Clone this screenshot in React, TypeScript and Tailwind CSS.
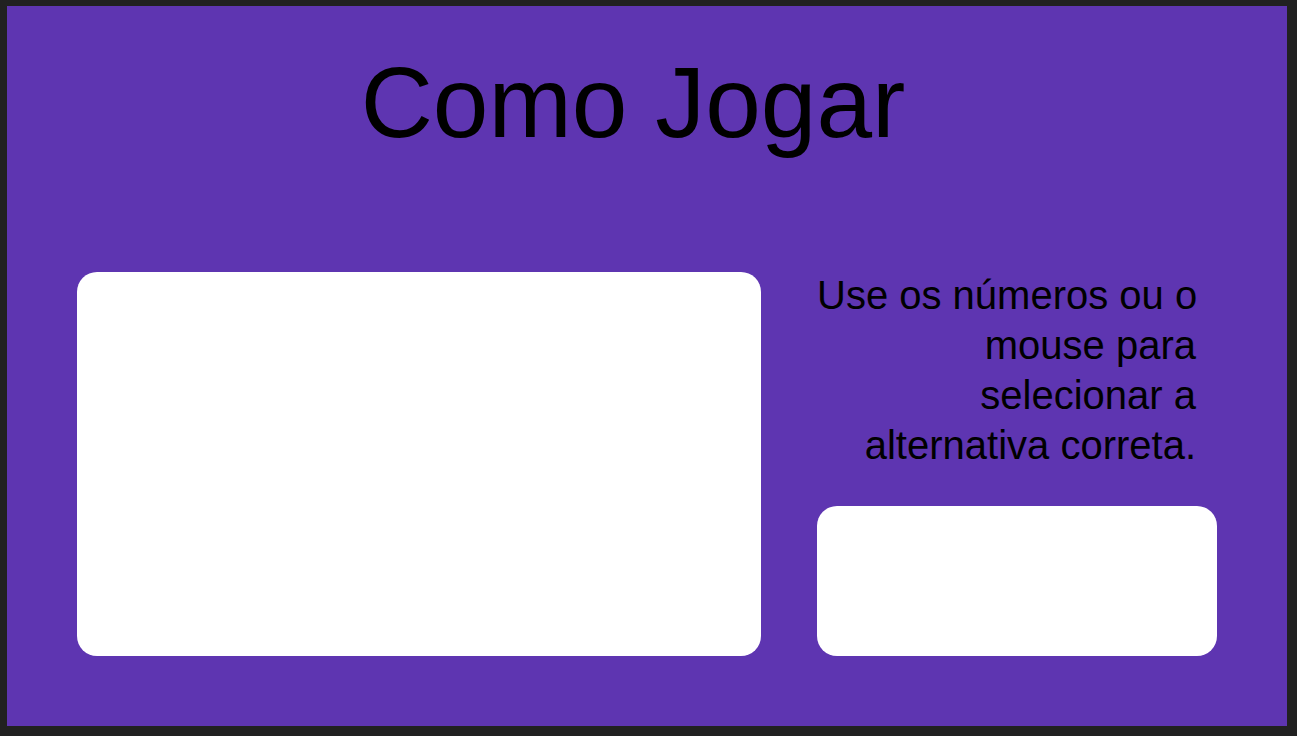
import React from "react";

export default function App() {
  return (
    <div className="w-[1297px] h-[736px] bg-[#212121] pl-[7px] pt-[6px] overflow-hidden">
      <div
        className="w-[1280px] h-[720px] bg-[#5e35b1] flex flex-col text-black"
        style={{ fontFamily: '"Liberation Sans", Arial, sans-serif' }}
      >
        <h1 className="pt-[46px] pr-[28px] text-center text-[100px] leading-none font-normal">
          Como Jogar
        </h1>
        <div className="mt-[120px] flex px-[70px] gap-[56px] items-start">
          <div className="w-[684px] h-[384px] bg-white rounded-[20px]" />
          <div className="w-[400px] flex flex-col">
            <p className="-mt-[2px] pr-[21px] text-right text-[40px] leading-[50px] whitespace-nowrap">
              Use os números ou o<br />
              mouse para<br />
              selecionar a<br />
              alternativa correta.
            </p>
            <div className="mt-[36px] w-[400px] h-[150px] bg-white rounded-[20px]" />
          </div>
        </div>
      </div>
    </div>
  );
}
